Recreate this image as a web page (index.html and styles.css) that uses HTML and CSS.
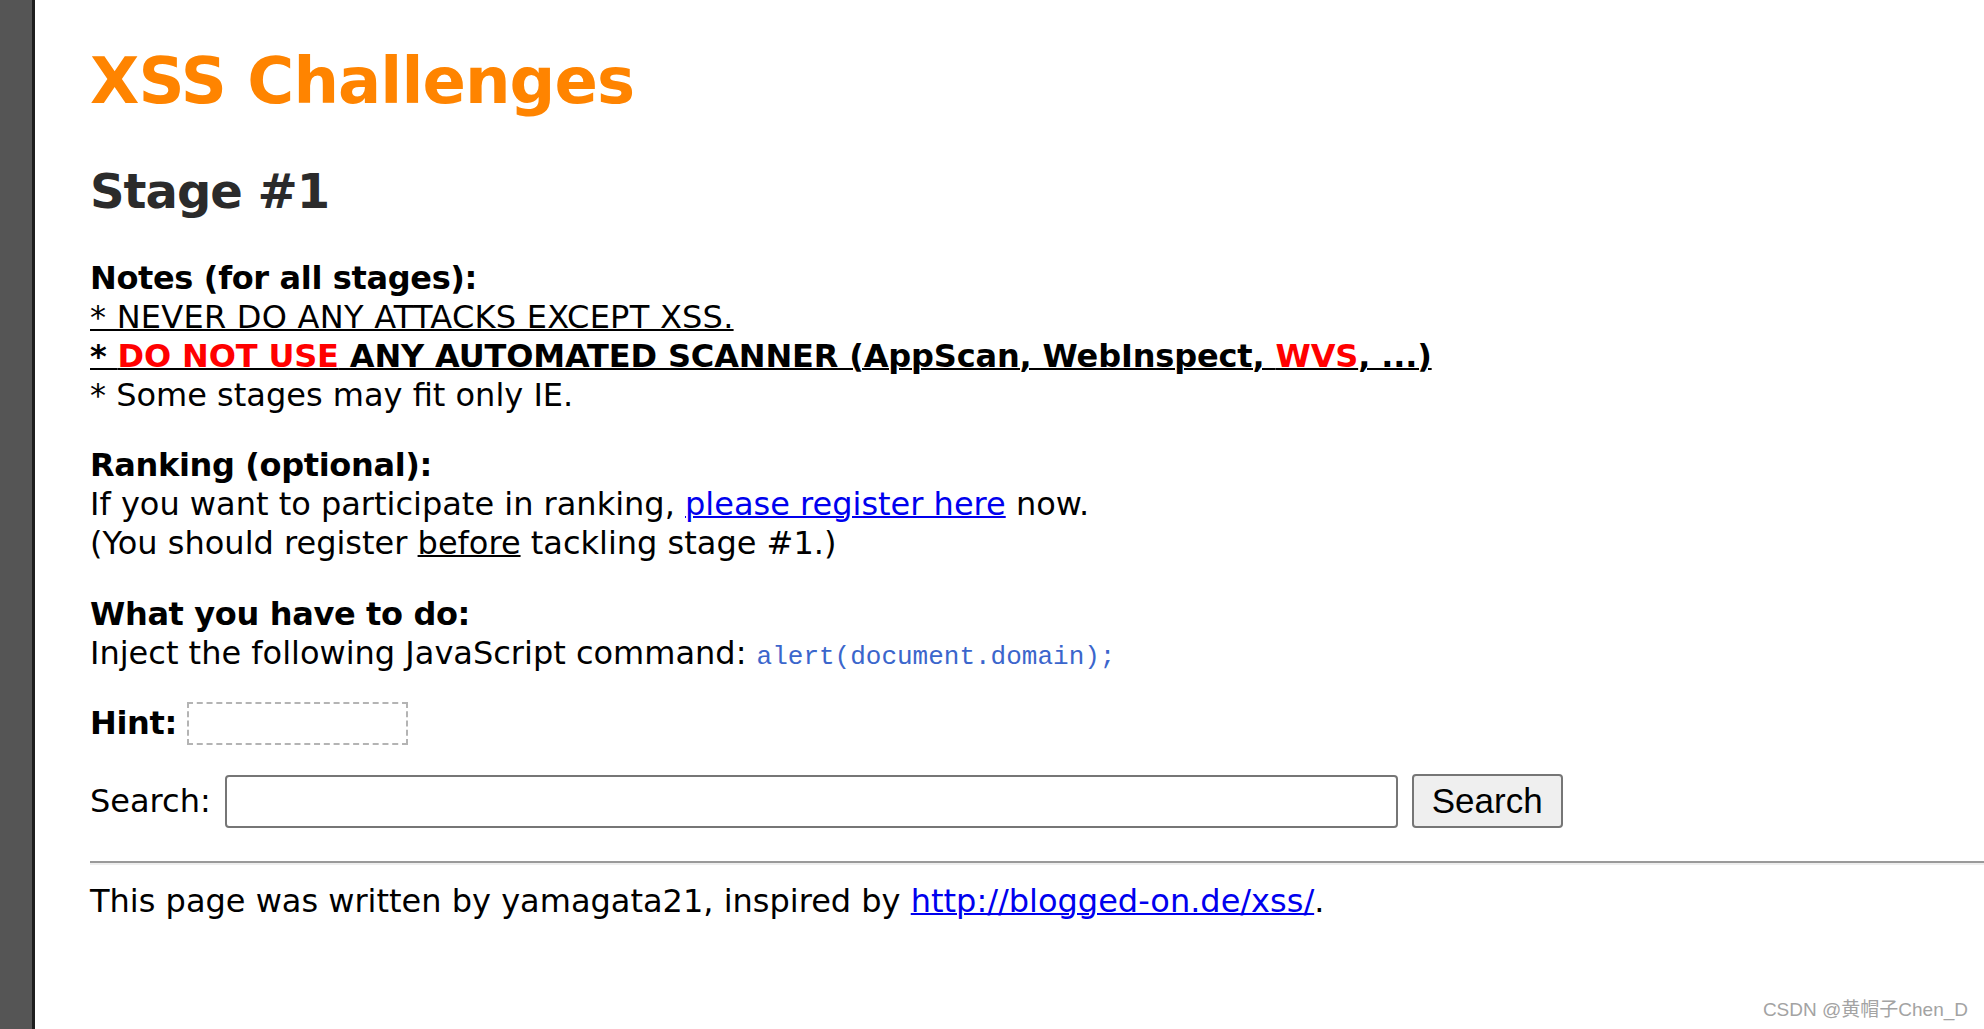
FILE: index.html
```html
<!DOCTYPE html>
<html lang="en">
<head>
<meta charset="utf-8">
<title>XSS Challenges (by yamagata21) - Stage #1</title>
<link rel="stylesheet" href="styles.css">
</head>
<body>
<div class="page">
  <div class="sidebar"></div>
  <main class="content">
    <h1 class="title">XSS Challenges</h1>
    <h2 class="stage">Stage #1</h2>

    <div class="block notes">
      <div class="line"><b class="label">Notes (for all stages):</b></div>
      <div class="line"><u class="caps">* NEVER DO ANY ATTACKS EXCEPT XSS.</u></div>
      <div class="line"><b class="warn"><u>* <span class="red">DO NOT USE</span> ANY AUTOMATED SCANNER (AppScan, WebInspect, <span class="red">WVS</span>, ...)</u></b></div>
      <div class="line">* Some stages may fit only IE.</div>
    </div>

    <div class="block ranking">
      <div class="line"><b class="label">Ranking (optional):</b></div>
      <div class="line">If you want to participate in ranking, <a href="#" class="link">please register here</a> now.</div>
      <div class="line">(You should register <u>before</u> tackling stage #1.)</div>
    </div>

    <div class="block todo">
      <div class="line"><b class="label">What you have to do:</b></div>
      <div class="line">Inject the following JavaScript command: <code class="cmd">alert(document.domain);</code></div>
    </div>

    <div class="hint-row">
      <b class="label">Hint:</b>
      <span class="hint-box"></span>
    </div>

    <form class="search-row" onsubmit="return false;">
      <label class="search-label">Search:</label>
      <input type="text" class="search-input">
      <button type="submit" class="search-btn">Search</button>
    </form>

    <hr class="rule">

    <div class="footer">This page was written by yamagata21, inspired by <a href="#" class="link">http://blogged-on.de/xss/</a>.</div>
  </main>
</div>
<div class="watermark">CSDN @黄帽子Chen_D</div>
</body>
</html>
```

FILE: styles.css
```css
html, body {
  margin: 0;
  padding: 0;
  background: #ffffff;
}

body {
  font-family: "DejaVu Sans", sans-serif;
  font-size: 32px;
  color: #000000;
  overflow: hidden;
}

.page {
  display: flex;
  min-height: 100vh;
}

.sidebar {
  width: 32px;
  flex: 0 0 32px;
  background: #555555;
  border-right: 3px solid #1e1e1e;
}

.content {
  flex: 1;
  padding-left: 55px;
  min-width: 0;
}

.title {
  margin: 43px 0 0 0;
  font-size: 64px;
  line-height: 77px;
  font-weight: bold;
  letter-spacing: -0.9px;
  color: #ff8400;
}

.stage {
  margin: 42px 0 0 0;
  font-size: 48px;
  line-height: 58px;
  font-weight: bold;
  letter-spacing: -1px;
  color: #2b2b2b;
}

.block {
  line-height: 39px;
}

.notes { margin-top: 39px; }
.ranking { margin-top: 31px; }
.todo { margin-top: 32px; }

.label {
  letter-spacing: -0.35px;
}

.caps {
  letter-spacing: 0.25px;
}

.warn {
  letter-spacing: -0.15px;
}

u {
  text-decoration-thickness: 2px;
}

.red { color: #ff0000; }

.link {
  color: #0000ee;
  text-decoration: underline;
  text-decoration-thickness: 2px;
}

.cmd {
  font-family: "Liberation Mono", monospace;
  font-size: 26px;
  color: #3b66cc;
}

.hint-row {
  margin-top: 25px;
  height: 42px;
  display: flex;
  align-items: center;
  gap: 10px;
  line-height: 39px;
}

.hint-box {
  width: 221px;
  height: 43px;
  box-sizing: border-box;
  border: 2px dashed #b4b4b4;
}

.search-row {
  margin: 30px 0 0 0;
  height: 54px;
  display: flex;
  align-items: center;
  line-height: 39px;
}

.search-label {
  margin-right: 14px;
}

.search-input {
  width: 1173px;
  height: 53px;
  box-sizing: border-box;
  border: 2px solid #767676;
  border-radius: 4px;
  background: #ffffff;
  padding: 0 4px;
  margin: 0;
  font-size: 26px;
}

.search-btn {
  margin: 0 0 0 14px;
  width: 151px;
  height: 54px;
  box-sizing: border-box;
  border: 2px solid #767676;
  border-radius: 4px;
  background: #efefef;
  font-family: "Liberation Sans", Arial, sans-serif;
  font-size: 35px;
  color: #000000;
  padding: 0;
}

.rule {
  margin: 33px 0 0 0;
  height: 0;
  border: 0;
  border-top: 2px solid #9a9a9a;
  border-bottom: 2px solid #eeeeee;
}

.footer {
  margin-top: 17px;
  line-height: 39px;
}

.watermark {
  position: absolute;
  right: 16px;
  bottom: 8px;
  font-family: "Liberation Sans", "Noto Sans CJK SC", sans-serif;
  font-size: 19px;
  color: #a3a3a3;
  text-shadow: 0 0 1px #ffffff;
}
```
